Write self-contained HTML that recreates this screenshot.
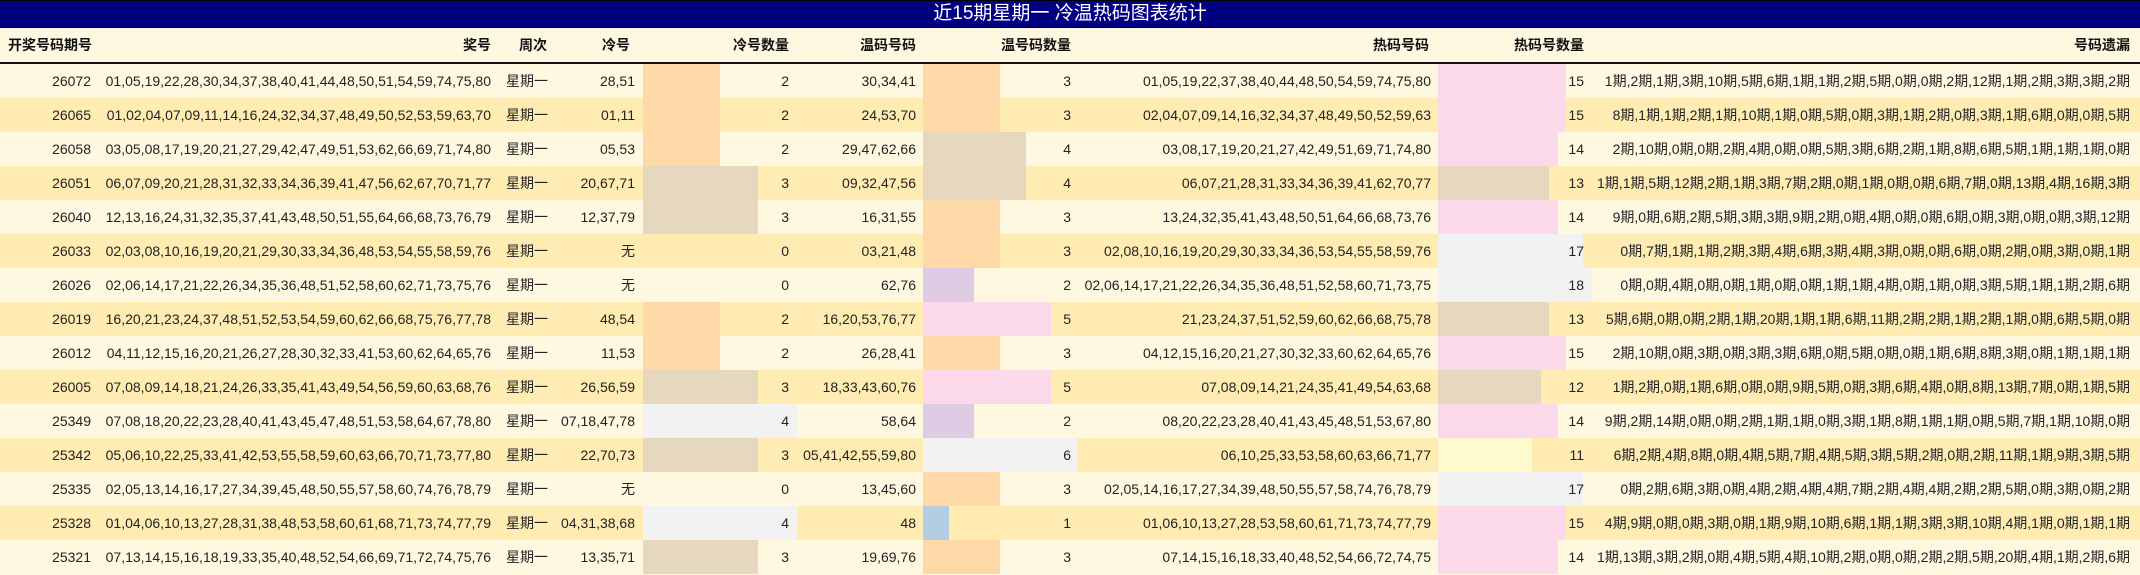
<!DOCTYPE html>
<html><head><meta charset="utf-8"><style>
*{margin:0;padding:0;box-sizing:border-box}
body{width:2140px;height:575px;overflow:hidden;background:#FFF8E1;font-family:"Liberation Sans","Noto Sans CJK SC",sans-serif;font-size:14px;color:#222}
.t{position:absolute;left:0;top:0;width:2140px;height:28px;background:#000080;border-top:1px solid #000;border-bottom:1px solid #000;color:#fff;font-size:19px;text-align:center;line-height:26px}
.h{position:absolute;left:0;top:28px;width:2140px;height:36px;background:#FFF8E1;border-bottom:2px solid #111;font-weight:bold;color:#111}
.h span{position:absolute;top:0;line-height:34px;white-space:nowrap}
.r{position:absolute;left:0;width:2140px;height:34px;background:#FFF8E1}
.r.a{background:#FFECB3}
.r span{position:absolute;top:0;line-height:34px;white-space:nowrap}
.b{position:absolute;top:0;height:34px}
.p{background:#FFD8A8}.n{background:#E6D8BE}.g{background:#F2F2F2}.k{background:#FCD9EA}.v{background:#DFCCE4}.u{background:#B3CDE3}.y{background:#FFFACD}
.c1{right:2049px}.c2{right:1649px}.c3{left:506px}.c4{right:1505px}.c5{right:1351px}.c6{right:1224px}.c7{right:1069px}.c8{right:709px}.c9{right:556px}.c10{right:10px}
.cb{left:643px}.wb{left:923px}.hb{left:1438px}
</style></head><body>
<div class="t">近15期星期一 冷温热码图表统计</div>
<div class="h"><span style="left:8px">开奖号码期号</span><span class="c2">奖号</span><span style="left:519px">周次</span><span style="right:1510px">冷号</span><span class="c5">冷号数量</span><span class="c6">温码号码</span><span class="c7">温号码数量</span><span style="right:711px">热码号码</span><span class="c9">热码号数量</span><span class="c10">号码遗漏</span></div>

<div class="r" style="top:64px"><div class="b cb p" style="width:77px"></div><div class="b wb p" style="width:77px"></div><div class="b hb k" style="width:128px"></div><span class="c1">26072</span><span class="c2">01,05,19,22,28,30,34,37,38,40,41,44,48,50,51,54,59,74,75,80</span><span class="c3">星期一</span><span class="c4">28,51</span><span class="c5">2</span><span class="c6">30,34,41</span><span class="c7">3</span><span class="c8">01,05,19,22,37,38,40,44,48,50,54,59,74,75,80</span><span class="c9">15</span><span class="c10">1期,2期,1期,3期,10期,5期,6期,1期,1期,2期,5期,0期,0期,2期,12期,1期,2期,3期,3期,2期</span></div>

<div class="r a" style="top:98px"><div class="b cb p" style="width:77px"></div><div class="b wb p" style="width:77px"></div><div class="b hb k" style="width:128px"></div><span class="c1">26065</span><span class="c2">01,02,04,07,09,11,14,16,24,32,34,37,48,49,50,52,53,59,63,70</span><span class="c3">星期一</span><span class="c4">01,11</span><span class="c5">2</span><span class="c6">24,53,70</span><span class="c7">3</span><span class="c8">02,04,07,09,14,16,32,34,37,48,49,50,52,59,63</span><span class="c9">15</span><span class="c10">8期,1期,1期,2期,1期,10期,1期,0期,5期,0期,3期,1期,2期,0期,3期,1期,6期,0期,0期,5期</span></div>

<div class="r" style="top:132px"><div class="b cb p" style="width:77px"></div><div class="b wb n" style="width:103px"></div><div class="b hb k" style="width:120px"></div><span class="c1">26058</span><span class="c2">03,05,08,17,19,20,21,27,29,42,47,49,51,53,62,66,69,71,74,80</span><span class="c3">星期一</span><span class="c4">05,53</span><span class="c5">2</span><span class="c6">29,47,62,66</span><span class="c7">4</span><span class="c8">03,08,17,19,20,21,27,42,49,51,69,71,74,80</span><span class="c9">14</span><span class="c10">2期,10期,0期,0期,2期,4期,0期,0期,5期,3期,6期,2期,1期,8期,6期,5期,1期,1期,1期,0期</span></div>

<div class="r a" style="top:166px"><div class="b cb n" style="width:115px"></div><div class="b wb n" style="width:103px"></div><div class="b hb n" style="width:111px"></div><span class="c1">26051</span><span class="c2">06,07,09,20,21,28,31,32,33,34,36,39,41,47,56,62,67,70,71,77</span><span class="c3">星期一</span><span class="c4">20,67,71</span><span class="c5">3</span><span class="c6">09,32,47,56</span><span class="c7">4</span><span class="c8">06,07,21,28,31,33,34,36,39,41,62,70,77</span><span class="c9">13</span><span class="c10">1期,1期,5期,12期,2期,1期,3期,7期,2期,0期,1期,0期,0期,6期,7期,0期,13期,4期,16期,3期</span></div>

<div class="r" style="top:200px"><div class="b cb n" style="width:115px"></div><div class="b wb p" style="width:77px"></div><div class="b hb k" style="width:120px"></div><span class="c1">26040</span><span class="c2">12,13,16,24,31,32,35,37,41,43,48,50,51,55,64,66,68,73,76,79</span><span class="c3">星期一</span><span class="c4">12,37,79</span><span class="c5">3</span><span class="c6">16,31,55</span><span class="c7">3</span><span class="c8">13,24,32,35,41,43,48,50,51,64,66,68,73,76</span><span class="c9">14</span><span class="c10">9期,0期,6期,2期,5期,3期,3期,9期,2期,0期,4期,0期,0期,6期,0期,3期,0期,0期,3期,12期</span></div>

<div class="r a" style="top:234px"><div class="b wb p" style="width:77px"></div><div class="b hb g" style="width:145px"></div><span class="c1">26033</span><span class="c2">02,03,08,10,16,19,20,21,29,30,33,34,36,48,53,54,55,58,59,76</span><span class="c3">星期一</span><span class="c4">无</span><span class="c5">0</span><span class="c6">03,21,48</span><span class="c7">3</span><span class="c8">02,08,10,16,19,20,29,30,33,34,36,53,54,55,58,59,76</span><span class="c9">17</span><span class="c10">0期,7期,1期,1期,2期,3期,4期,6期,3期,4期,3期,0期,0期,6期,0期,2期,0期,3期,0期,1期</span></div>

<div class="r" style="top:268px"><div class="b wb v" style="width:51px"></div><div class="b hb g" style="width:154px"></div><span class="c1">26026</span><span class="c2">02,06,14,17,21,22,26,34,35,36,48,51,52,58,60,62,71,73,75,76</span><span class="c3">星期一</span><span class="c4">无</span><span class="c5">0</span><span class="c6">62,76</span><span class="c7">2</span><span class="c8">02,06,14,17,21,22,26,34,35,36,48,51,52,58,60,71,73,75</span><span class="c9">18</span><span class="c10">0期,0期,4期,0期,0期,1期,0期,0期,1期,1期,4期,0期,1期,0期,3期,5期,1期,1期,2期,6期</span></div>

<div class="r a" style="top:302px"><div class="b cb p" style="width:77px"></div><div class="b wb k" style="width:128px"></div><div class="b hb n" style="width:111px"></div><span class="c1">26019</span><span class="c2">16,20,21,23,24,37,48,51,52,53,54,59,60,62,66,68,75,76,77,78</span><span class="c3">星期一</span><span class="c4">48,54</span><span class="c5">2</span><span class="c6">16,20,53,76,77</span><span class="c7">5</span><span class="c8">21,23,24,37,51,52,59,60,62,66,68,75,78</span><span class="c9">13</span><span class="c10">5期,6期,0期,0期,2期,1期,20期,1期,1期,6期,11期,2期,2期,1期,2期,1期,0期,6期,5期,0期</span></div>

<div class="r" style="top:336px"><div class="b cb p" style="width:77px"></div><div class="b wb p" style="width:77px"></div><div class="b hb k" style="width:128px"></div><span class="c1">26012</span><span class="c2">04,11,12,15,16,20,21,26,27,28,30,32,33,41,53,60,62,64,65,76</span><span class="c3">星期一</span><span class="c4">11,53</span><span class="c5">2</span><span class="c6">26,28,41</span><span class="c7">3</span><span class="c8">04,12,15,16,20,21,27,30,32,33,60,62,64,65,76</span><span class="c9">15</span><span class="c10">2期,10期,0期,3期,0期,3期,3期,6期,0期,5期,0期,0期,1期,6期,8期,3期,0期,1期,1期,1期</span></div>

<div class="r a" style="top:370px"><div class="b cb n" style="width:115px"></div><div class="b wb k" style="width:128px"></div><div class="b hb n" style="width:103px"></div><span class="c1">26005</span><span class="c2">07,08,09,14,18,21,24,26,33,35,41,43,49,54,56,59,60,63,68,76</span><span class="c3">星期一</span><span class="c4">26,56,59</span><span class="c5">3</span><span class="c6">18,33,43,60,76</span><span class="c7">5</span><span class="c8">07,08,09,14,21,24,35,41,49,54,63,68</span><span class="c9">12</span><span class="c10">1期,2期,0期,1期,6期,0期,0期,9期,5期,0期,3期,6期,4期,0期,8期,13期,7期,0期,1期,5期</span></div>

<div class="r" style="top:404px"><div class="b cb g" style="width:154px"></div><div class="b wb v" style="width:51px"></div><div class="b hb k" style="width:120px"></div><span class="c1">25349</span><span class="c2">07,08,18,20,22,23,28,40,41,43,45,47,48,51,53,58,64,67,78,80</span><span class="c3">星期一</span><span class="c4">07,18,47,78</span><span class="c5">4</span><span class="c6">58,64</span><span class="c7">2</span><span class="c8">08,20,22,23,28,40,41,43,45,48,51,53,67,80</span><span class="c9">14</span><span class="c10">9期,2期,14期,0期,0期,2期,1期,1期,0期,3期,1期,8期,1期,1期,0期,5期,7期,1期,10期,0期</span></div>

<div class="r a" style="top:438px"><div class="b cb n" style="width:115px"></div><div class="b wb g" style="width:154px"></div><div class="b hb y" style="width:94px"></div><span class="c1">25342</span><span class="c2">05,06,10,22,25,33,41,42,53,55,58,59,60,63,66,70,71,73,77,80</span><span class="c3">星期一</span><span class="c4">22,70,73</span><span class="c5">3</span><span class="c6">05,41,42,55,59,80</span><span class="c7">6</span><span class="c8">06,10,25,33,53,58,60,63,66,71,77</span><span class="c9">11</span><span class="c10">6期,2期,4期,8期,0期,4期,5期,7期,4期,5期,3期,5期,2期,0期,2期,11期,1期,9期,3期,5期</span></div>

<div class="r" style="top:472px"><div class="b wb p" style="width:77px"></div><div class="b hb g" style="width:145px"></div><span class="c1">25335</span><span class="c2">02,05,13,14,16,17,27,34,39,45,48,50,55,57,58,60,74,76,78,79</span><span class="c3">星期一</span><span class="c4">无</span><span class="c5">0</span><span class="c6">13,45,60</span><span class="c7">3</span><span class="c8">02,05,14,16,17,27,34,39,48,50,55,57,58,74,76,78,79</span><span class="c9">17</span><span class="c10">0期,2期,6期,3期,0期,4期,2期,4期,4期,7期,2期,4期,4期,2期,2期,5期,0期,3期,0期,2期</span></div>

<div class="r a" style="top:506px"><div class="b cb g" style="width:154px"></div><div class="b wb u" style="width:26px"></div><div class="b hb k" style="width:128px"></div><span class="c1">25328</span><span class="c2">01,04,06,10,13,27,28,31,38,48,53,58,60,61,68,71,73,74,77,79</span><span class="c3">星期一</span><span class="c4">04,31,38,68</span><span class="c5">4</span><span class="c6">48</span><span class="c7">1</span><span class="c8">01,06,10,13,27,28,53,58,60,61,71,73,74,77,79</span><span class="c9">15</span><span class="c10">4期,9期,0期,0期,3期,0期,1期,9期,10期,6期,1期,1期,3期,3期,10期,4期,1期,0期,1期,1期</span></div>

<div class="r" style="top:540px"><div class="b cb n" style="width:115px"></div><div class="b wb p" style="width:77px"></div><div class="b hb k" style="width:120px"></div><span class="c1">25321</span><span class="c2">07,13,14,15,16,18,19,33,35,40,48,52,54,66,69,71,72,74,75,76</span><span class="c3">星期一</span><span class="c4">13,35,71</span><span class="c5">3</span><span class="c6">19,69,76</span><span class="c7">3</span><span class="c8">07,14,15,16,18,33,40,48,52,54,66,72,74,75</span><span class="c9">14</span><span class="c10">1期,13期,3期,2期,0期,4期,5期,4期,10期,2期,0期,0期,2期,2期,5期,20期,4期,1期,2期,6期</span></div>
</body></html>
